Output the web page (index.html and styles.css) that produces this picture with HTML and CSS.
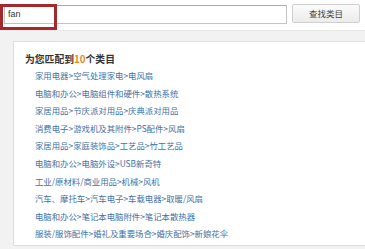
FILE: index.html
```html
<!DOCTYPE html>
<html lang="zh-CN">
<head>
    <meta charset="UTF-8">
    <title>查找类目</title>
    <link rel="stylesheet" href="styles.css">
</head>
<body>
    <div class="search-bar">
        <div class="search-input">fan</div>
        <button class="search-btn">查找类目</button>
        <span class="search-help">帮助</span>
        <!-- highlight marker -->
        <div class="mark"></div>
    </div>

    <div class="result-area">
        <div class="result-panel">
            <div class="result-title">为您匹配到<span class="count">10</span>个类目</div>
            <ul class="result-list">
                <li><a href="#">家用电器&gt;空气处理家电&gt;电风扇</a></li>
                <li><a href="#">电脑和办公&gt;电脑组件和硬件&gt;散热系统</a></li>
                <li><a href="#">家居用品&gt;节庆派对用品&gt;庆典派对用品</a></li>
                <li><a href="#">消费电子&gt;游戏机及其附件&gt;PS配件&gt;风扇</a></li>
                <li><a href="#">家居用品&gt;家庭装饰品&gt;工艺品&gt;竹工艺品</a></li>
                <li><a href="#">电脑和办公&gt;电脑外设&gt;USB新奇特</a></li>
                <li><a href="#">工业/原材料/商业用品&gt;机械&gt;风机</a></li>
                <li><a href="#">汽车、摩托车&gt;汽车电子&gt;车载电器&gt;取暖/风扇</a></li>
                <li><a href="#">电脑和办公&gt;笔记本电脑附件&gt;笔记本散热器</a></li>
                <li><a href="#">服装/服饰配件&gt;婚礼及重要场合&gt;婚庆配饰&gt;新娘花伞</a></li>
            </ul>
        </div>
    </div>
</body>
</html>
```

FILE: styles.css
```css
body {
    margin: 0;
    font-family: "Noto Sans CJK SC", "Liberation Sans", sans-serif;
    background: #fff;
    overflow: hidden;
}
.search-bar {
    position: relative;
    display: flex;
    align-items: flex-start;
    height: 25px;
    padding: 5px 0 0 4px;
    white-space: nowrap;
    overflow: hidden;
}
.search-input {
    box-sizing: border-box;
    flex: none;
    width: 283px;
    height: 19px;
    border: 1px solid #c4c4c4;
    border-top-color: #a9a9a9;
    padding: 0 0 0 3px;
    font-family: "Liberation Sans", sans-serif;
    font-size: 9px;
    line-height: 17px;
    color: #333;
}
.search-btn {
    box-sizing: border-box;
    flex: none;
    width: 68px;
    height: 19px;
    margin: -1px 0 0 5px;
    padding: 0;
    border: 1px solid #cfcfcf;
    border-radius: 2px;
    background: linear-gradient(#fbfbfb, #ebebeb);
    font-family: "Noto Sans CJK SC", sans-serif;
    font-size: 8.5px;
    line-height: 17px;
    color: #444;
}
.search-help {
    flex: none;
    margin-left: 7px;
    font-size: 8.5px;
    line-height: 17px;
    color: #8fc3dc;
}
.mark {
    position: absolute;
    left: 0;
    top: 4px;
    width: 57px;
    height: 26px;
    box-sizing: border-box;
    border: 3px solid #a4292d;
}
.result-area {
    background: #f2f2f2;
    padding: 10px 0 0 13px;
    border-top: 1px solid #e9e9e9;
    height: 208px;
    overflow: hidden;
}
.result-panel {
    width: 420px;
    height: 193px;
    background: #fff;
    border: 1px solid #dedede;
    padding: 10px 0 0 11px;
}
.result-title {
    font-size: 9.8px;
    font-weight: bold;
    line-height: 14px;
    color: #333;
    margin-bottom: 1px;
}
.count {
    color: #e8891d;
}
.result-list {
    list-style: none;
    margin: 0;
    padding: 0 0 0 10px;
}
.result-list li {
    font-size: 8.4px;
    line-height: 17.6px;
}
.result-list a {
    color: #3f71a5;
    text-decoration: none;
}
```
